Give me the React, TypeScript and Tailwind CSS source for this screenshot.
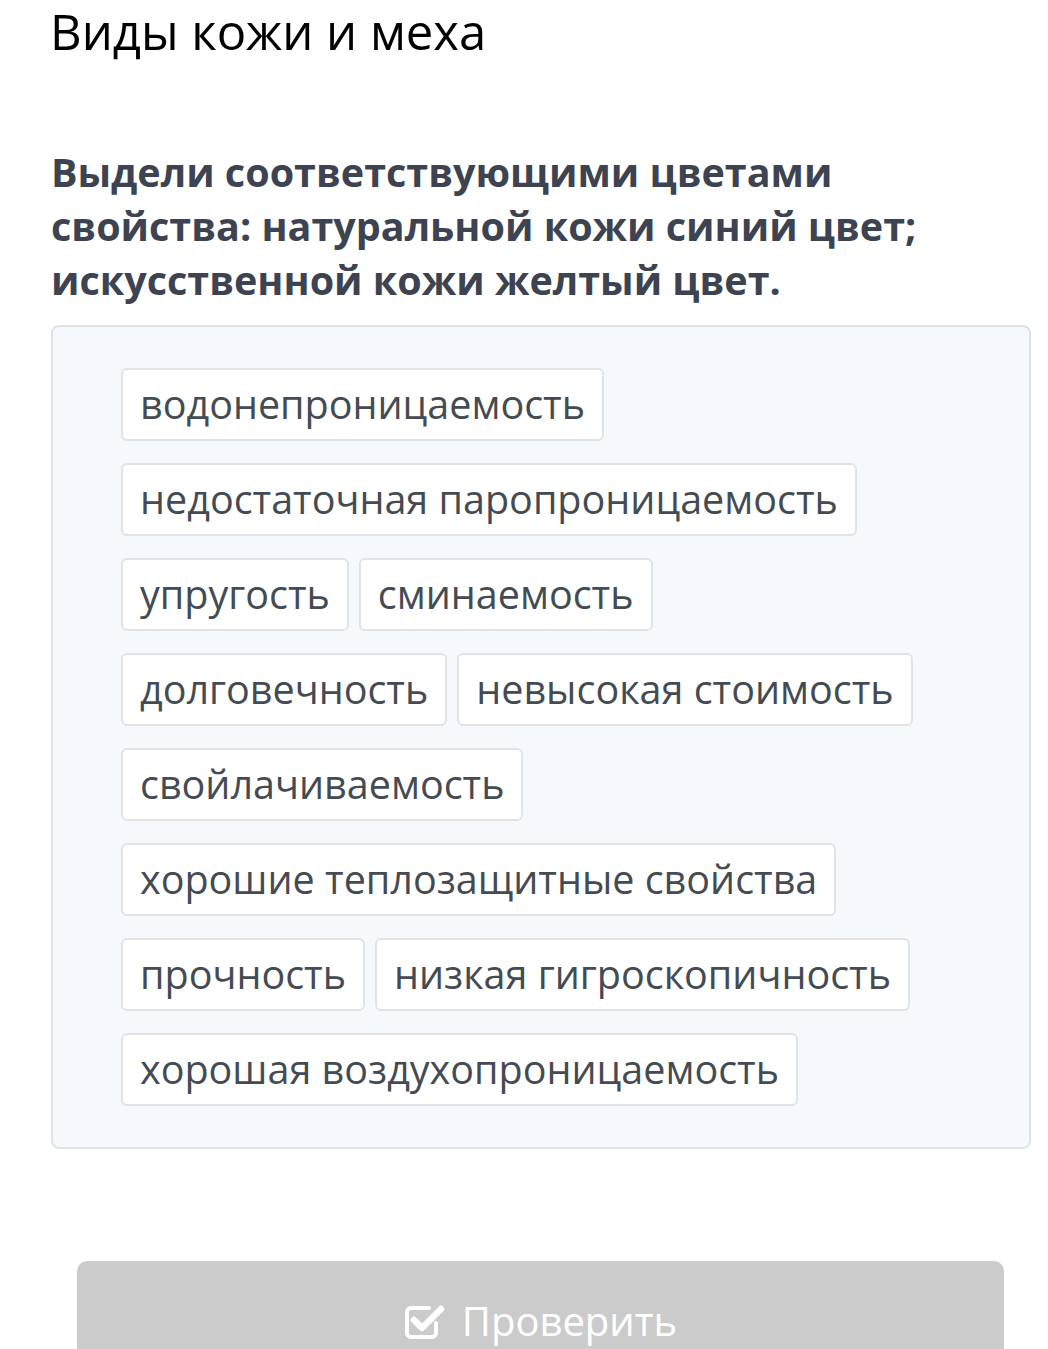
const items = [
  "водонепроницаемость",
  "недостаточная паропроницаемость",
  "упругость",
  "сминаемость",
  "долговечность",
  "невысокая стоимость",
  "свойлачиваемость",
  "хорошие теплозащитные свойства",
  "прочность",
  "низкая гигроскопичность",
  "хорошая воздухопроницаемость",
];

function CheckIcon() {
  return (
    <svg width="44" height="40" viewBox="0 0 44 40" fill="none">
      <path
        d="M32 22 V32 a4 4 0 0 1 -4 4 H7 a4 4 0 0 1 -4 -4 V11 a4 4 0 0 1 4 -4 H25"
        stroke="white"
        strokeWidth="4"
        strokeLinecap="round"
      />
      <path
        d="M10 19 L18 27 L37 8"
        stroke="white"
        strokeWidth="6.5"
        strokeLinecap="round"
        strokeLinejoin="round"
      />
    </svg>
  );
}

export default function App() {
  return (
    <div
      className="w-[1048px] h-[1349px] overflow-hidden bg-white"
      style={{ fontFamily: '"Open Sans", sans-serif' }}
    >
      <h1 className="pl-[50px] text-[49px] leading-[62px] text-black">
        Виды кожи и меха
      </h1>
      <div className="mt-[83px] pl-[51px] pr-[100px] text-[39.5px] font-bold leading-[54px] text-[#3d4350]">
        Выдели соответствующими цветами свойства: натуральной кожи синий цвет;
        искусственной кожи желтый цвет.
      </div>
      <div className="ml-[51px] mr-[17px] mt-[18px] rounded-[8px] border-2 border-[#dee3e7] bg-[#f5f9fc] pl-[68px] pr-[68px] pt-[41px] pb-[41px]">
        <div className="flex flex-wrap gap-x-[10px] gap-y-[22px]">
          {items.map((t) => (
            <div
              key={t}
              className="h-[73px] rounded-[6px] border-2 border-[#e1e4e7] bg-white px-[17px] text-[39.5px] leading-[69px] text-[#444b52]"
            >
              {t}
            </div>
          ))}
        </div>
      </div>
      <div className="ml-[77px] mr-[44px] mt-[112px] h-[120px] rounded-t-[10px] bg-[#cbcbcb] pt-[30px]">
        <div className="flex items-center justify-center gap-[14px] text-[40px] leading-[60px] text-white">
          <CheckIcon />
          <span>Проверить</span>
        </div>
      </div>
    </div>
  );
}
